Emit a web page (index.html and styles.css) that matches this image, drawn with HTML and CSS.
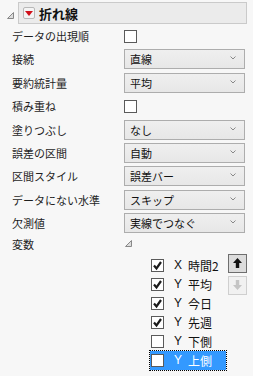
FILE: index.html
```html
<!doctype html>
<html lang="ja">
  <head>
    <meta charset="UTF-8" />
    <title>折れ線</title>
    <link rel="stylesheet" href="styles.css">
  </head>
  <body>
    <div class="panel">
      <div class="head">
        <svg class="tri" width="7" height="7" viewBox="0 0 7 7"><polygon points="0.5,6.5 6.5,0.5 6.5,6.5" fill="#ddd" stroke="#888" stroke-width="1"/></svg>
        <div class="title-box">
          <span class="menu-btn"><svg width="8" height="5" viewBox="0 0 8 5"><polygon points="0,0 8,0 4,5" fill="#d0101a"/></svg></span>
          <span class="title">折れ線</span>
        </div>
      </div>

      <div class="form">
        <div class="lbl">データの出現順</div>
        <div class="ctl"><span class="box"></span></div>

        <div class="lbl">接続</div>
        <div class="ctl"><div class="select"><span>直線</span><svg class="chev" width="6" height="4" viewBox="0 0 6 4"><polyline points="0.5,0.5 3,3 5.5,0.5" fill="none" stroke="#888"/></svg></div></div>

        <div class="lbl">要約統計量</div>
        <div class="ctl"><div class="select"><span>平均</span><svg class="chev" width="6" height="4" viewBox="0 0 6 4"><polyline points="0.5,0.5 3,3 5.5,0.5" fill="none" stroke="#888"/></svg></div></div>

        <div class="lbl">積み重ね</div>
        <div class="ctl"><span class="box"></span></div>

        <div class="lbl">塗りつぶし</div>
        <div class="ctl"><div class="select"><span>なし</span><svg class="chev" width="6" height="4" viewBox="0 0 6 4"><polyline points="0.5,0.5 3,3 5.5,0.5" fill="none" stroke="#888"/></svg></div></div>

        <div class="lbl">誤差の区間</div>
        <div class="ctl"><div class="select"><span>自動</span><svg class="chev" width="6" height="4" viewBox="0 0 6 4"><polyline points="0.5,0.5 3,3 5.5,0.5" fill="none" stroke="#888"/></svg></div></div>

        <div class="lbl">区間スタイル</div>
        <div class="ctl"><div class="select"><span>誤差バー</span><svg class="chev" width="6" height="4" viewBox="0 0 6 4"><polyline points="0.5,0.5 3,3 5.5,0.5" fill="none" stroke="#888"/></svg></div></div>

        <div class="lbl">データにない水準</div>
        <div class="ctl"><div class="select"><span>スキップ</span><svg class="chev" width="6" height="4" viewBox="0 0 6 4"><polyline points="0.5,0.5 3,3 5.5,0.5" fill="none" stroke="#888"/></svg></div></div>

        <div class="lbl">欠測値</div>
        <div class="ctl"><div class="select"><span>実線でつなぐ</span><svg class="chev" width="6" height="4" viewBox="0 0 6 4"><polyline points="0.5,0.5 3,3 5.5,0.5" fill="none" stroke="#888"/></svg></div></div>

        <div class="lbl">変数</div>
        <div class="ctl vtri"><svg width="7" height="7" viewBox="0 0 7 7"><polygon points="0.5,6.5 6.5,0.5 6.5,6.5" fill="#ddd" stroke="#888" stroke-width="1"/></svg></div>
      </div>

      <div class="vars">
        <div class="list">
          <div class="item"><span class="box on"><svg width="11" height="11" viewBox="0 0 11 11"><polyline points="2,5.5 4.5,8.5 9,2" fill="none" stroke="#1a1a1a" stroke-width="2.2"/></svg></span><span class="role">X</span><span class="name">時間2</span></div>
          <div class="item"><span class="box on"><svg width="11" height="11" viewBox="0 0 11 11"><polyline points="2,5.5 4.5,8.5 9,2" fill="none" stroke="#1a1a1a" stroke-width="2.2"/></svg></span><span class="role">Y</span><span class="name">平均</span></div>
          <div class="item"><span class="box on"><svg width="11" height="11" viewBox="0 0 11 11"><polyline points="2,5.5 4.5,8.5 9,2" fill="none" stroke="#1a1a1a" stroke-width="2.2"/></svg></span><span class="role">Y</span><span class="name">今日</span></div>
          <div class="item"><span class="box on"><svg width="11" height="11" viewBox="0 0 11 11"><polyline points="2,5.5 4.5,8.5 9,2" fill="none" stroke="#1a1a1a" stroke-width="2.2"/></svg></span><span class="role">Y</span><span class="name">先週</span></div>
          <div class="item"><span class="box"></span><span class="role">Y</span><span class="name">下側</span></div>
          <div class="item sel"><span class="box"></span><span class="role">Y</span><span class="name">上側</span></div>
        </div>
        <div class="btns">
          <span class="btn up"><svg width="9" height="10" viewBox="0 0 9 10"><polygon points="4.5,0 9,5 6.2,5 6.2,10 2.8,10 2.8,5 0,5" fill="#111"/></svg></span>
          <span class="btn down"><svg width="9" height="10" viewBox="0 0 9 10"><polygon points="4.5,10 9,5 6.2,5 6.2,0 2.8,0 2.8,5 0,5" fill="#c4c4c4"/></svg></span>
        </div>
      </div>
    </div>
  </body>
</html>
```

FILE: styles.css
```css
* {
  box-sizing: border-box;
}

html, body {
  margin: 0;
  background: #f7f7f7;
}

body {
  font-family: "Noto Sans CJK JP", "Noto Sans", sans-serif;
  color: #1e1e1e;
  width: 253px;
  height: 376px;
  overflow: hidden;
}

.head {
  display: flex;
  align-items: center;
  padding: 2px 6px 0 7px;
  gap: 4px;
}

.tri {
  flex: none;
  margin-top: 4px;
}

.title-box {
  flex: 1;
  height: 22px;
  display: flex;
  align-items: center;
  gap: 4px;
  padding-left: 4px;
  background: #ebebeb;
  border: 1px solid #cacaca;
}

.menu-btn {
  width: 12px;
  height: 12px;
  display: flex;
  align-items: center;
  justify-content: center;
  background: #f4f4f4;
  border: 1px solid #b8b8b8;
  border-radius: 2px;
}

.title {
  font-size: 13px;
  font-weight: bold;
  color: #111;
  line-height: 1;
}

.form {
  display: grid;
  grid-template-columns: 112px 121px;
  grid-template-rows: repeat(9, 20px) 14px;
  row-gap: 3.4px;
  padding: 2px 0 0 12px;
}

.lbl {
  font-size: 11px;
  display: flex;
  align-items: center;
  white-space: nowrap;
}

.ctl {
  display: flex;
  align-items: center;
}

.vtri {
  padding-left: 1px;
}

.box {
  width: 13px;
  height: 13px;
  background: #fff;
  border: 1px solid #5a5a5a;
  display: flex;
  align-items: center;
  justify-content: center;
  flex: none;
}

.select {
  width: 121px;
  height: 20px;
  display: flex;
  align-items: center;
  justify-content: space-between;
  padding: 0 8px 0 5px;
  background: linear-gradient(#efefef, #e7e7e7);
  border: 1px solid #adadad;
  font-size: 11px;
  color: #111;
}

.chev {
  margin-top: -2px;
}

.vars {
  display: flex;
  gap: 2px;
  padding: 3.4px 0 0 150px;
}

.list {
  width: 76px;
  padding-top: 2px;
}

.item {
  height: 19px;
  display: flex;
  align-items: center;
  font-size: 12px;
  color: #111;
}

.item .box {
  margin-left: 1px;
}

.role {
  margin-left: 10px;
  width: 14px;
  font-family: "Liberation Sans", sans-serif;
}

.item.sel {
  background: #3399ff;
  color: #fff;
  outline: 1px dotted #000;
  outline-offset: 0;
}

.btns {
  display: flex;
  flex-direction: column;
  gap: 3px;
}

.btn {
  width: 19px;
  height: 19px;
  display: flex;
  align-items: center;
  justify-content: center;
}

.btn.up {
  background: #dcdcdc;
  border: 1px solid #6e6e6e;
}

.btn.down {
  background: #f1f1f1;
  border: 1px solid #cfcfcf;
}
```
